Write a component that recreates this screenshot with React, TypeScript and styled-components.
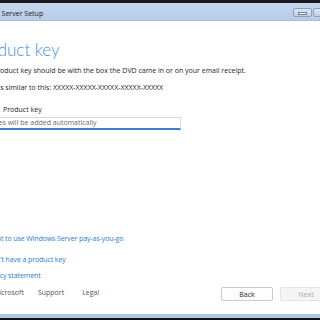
import React from "react";
import styled, { createGlobalStyle } from "styled-components";

const GlobalStyle = createGlobalStyle`
	html, body {
		margin: 0;
		padding: 0;
		background: #000;
		overflow: hidden;
	}
`;

const Frame = styled.div`
	width: 320px;
	height: 320px;
	overflow: hidden;
	display: flex;
	flex-direction: column;
	background: #000;
	font-family: "Open Sans", "Noto Sans", sans-serif;
`;

const TopEdge = styled.div`
	height: 3px;
	background: #1a1a1a;
`;

const TitleBar = styled.div`
	height: 17px;
	display: flex;
	align-items: center;
	justify-content: space-between;
	background: linear-gradient(#c7d9ef, #b5cce8);
	border-bottom: 1px solid #aac0dc;
`;

const Title = styled.span`
	margin: 4px 0 0 -30px;
	font-size: 7px;
	color: #1b1b1b;
	white-space: nowrap;
`;

const Controls = styled.div`
	display: flex;
	gap: 1px;
	margin: 2px -12px 0 0;
`;

const Control = styled.div`
	width: 19px;
	height: 9px;
	border: 1px solid #8aa2c0;
	border-radius: 2px;
	background: linear-gradient(#dce7f4, #bdd0e8);
	display: flex;
	align-items: center;
	justify-content: center;
	box-sizing: border-box;
`;

const Dash = styled.div`
	width: 7px;
	height: 1px;
	background: #fff;
	border: 1px solid #6d7f96;
	box-sizing: content-box;
	margin-top: 2px;
`;

const Body = styled.div`
	flex: 1;
	background: #fff;
	display: flex;
	flex-direction: column;
`;

const Content = styled.div`
	margin-left: -23px;
	display: flex;
	flex-direction: column;
	flex: 1;
`;

const Heading = styled.h1`
	margin: 18px 0 0 -4px;
	font-family: Lato, "Open Sans", sans-serif;
	font-weight: 300;
	font-size: 17px;
	line-height: 21px;
	color: #3d8fe3;
`;

const Text = styled.p<{ $top: number; $left: number }>`
	margin: ${(p) => p.$top}px 0 0 ${(p) => p.$left}px;
	font-size: 7px;
	line-height: 10px;
	color: #1e1e1e;
	white-space: nowrap;
`;

const Label = styled.div`
	margin: 12px 0 0 26px;
	font-size: 7px;
	line-height: 10px;
	color: #1e1e1e;
`;

const Input = styled.div`
	margin-top: 2px;
	width: 204px;
	height: 13px;
	box-sizing: border-box;
	border: 1px solid #dadada;
	border-bottom: 2px solid #3a7fd0;
	padding-left: 4px;
	font-size: 7px;
	line-height: 10px;
	color: #6a6a6a;
	white-space: nowrap;
	overflow: hidden;
`;

const Links = styled.div`
	margin: auto 0 0 7px;
	display: flex;
	flex-direction: column;
`;

const LinkText = styled.a<{ $top: number }>`
	font-size: 7px;
	line-height: 10px;
	letter-spacing: -0.1px;
	color: #2b7bd6;
	text-decoration: none;
	white-space: nowrap;
	margin-top: ${(p) => p.$top}px;
`;

const Footer = styled.div`
	display: flex;
	align-items: flex-start;
	justify-content: space-between;
	margin: 6px 0 13px 0;
`;

const FooterLinks = styled.div`
	display: flex;
	margin: 1px 0 0 4px;
	font-size: 7px;
	line-height: 10px;
	color: #555;
	white-space: nowrap;
`;

const FooterItem = styled.span<{ $gap: number }>`
	margin-left: ${(p) => p.$gap}px;
`;

const Logo = styled.span`
	display: inline-flex;
	align-items: center;
	gap: 3px;
`;

const Buttons = styled.div`
	display: flex;
	gap: 7px;
	margin-right: -12px;
`;

const Button = styled.div<{ $disabled?: boolean }>`
	width: 52px;
	height: 14px;
	box-sizing: border-box;
	border: 1px solid ${(p) => (p.$disabled ? "#e3e3e3" : "#c9c9c9")};
	border-radius: 2px;
	background: ${(p) => (p.$disabled ? "#f5f5f5" : "#fdfdfd")};
	color: ${(p) => (p.$disabled ? "#a9a9a9" : "#1e1e1e")};
	font-size: 7px;
	display: flex;
	align-items: center;
	justify-content: center;
`;

const BottomBar = styled.div`
	height: 4px;
	background: #a9c9e9;
`;

const BottomEdge = styled.div`
	height: 2px;
	background: #111;
`;

const App = (): JSX.Element => {
	return (
		<>
			<GlobalStyle />
			<Frame>
				<TopEdge />
				<TitleBar>
					<Title>Windows Server Setup</Title>
					<Controls>
						<Control>
							<Dash />
						</Control>
						<Control />
					</Controls>
				</TitleBar>
				<Body>
					<Content>
						<Heading>Product key</Heading>
						<Text $top={6} $left={2}>
							The product key should be with the box the DVD came in or on your email receipt.
						</Text>
						<Text $top={7} $left={3}>
							It looks similar to this: XXXXX-XXXXX-XXXXX-XXXXX-XXXXX
						</Text>
						<Label>Product key</Label>
						<Input>Dashes will be added automatically</Input>
						<Links>
							<LinkText $top={0}>I want to use Windows Server pay-as-you-go</LinkText>
							<LinkText $top={11}>I don't have a product key</LinkText>
							<LinkText $top={6}>Privacy statement</LinkText>
						</Links>
						<Footer>
							<FooterLinks>
								<Logo>
									<svg width="9" height="9" viewBox="0 0 9 9">
										<rect x="0" y="0" width="4" height="4" fill="#f25022" />
										<rect x="5" y="0" width="4" height="4" fill="#7fba00" />
										<rect x="0" y="5" width="4" height="4" fill="#00a4ef" />
										<rect x="5" y="5" width="4" height="4" fill="#ffb900" />
									</svg>
									Microsoft
								</Logo>
								<FooterItem $gap={14}>Support</FooterItem>
								<FooterItem $gap={18}>Legal</FooterItem>
							</FooterLinks>
							<Buttons>
								<Button>Back</Button>
								<Button $disabled>Next</Button>
							</Buttons>
						</Footer>
					</Content>
				</Body>
				<BottomBar />
				<BottomEdge />
			</Frame>
		</>
	);
};

export default App;
